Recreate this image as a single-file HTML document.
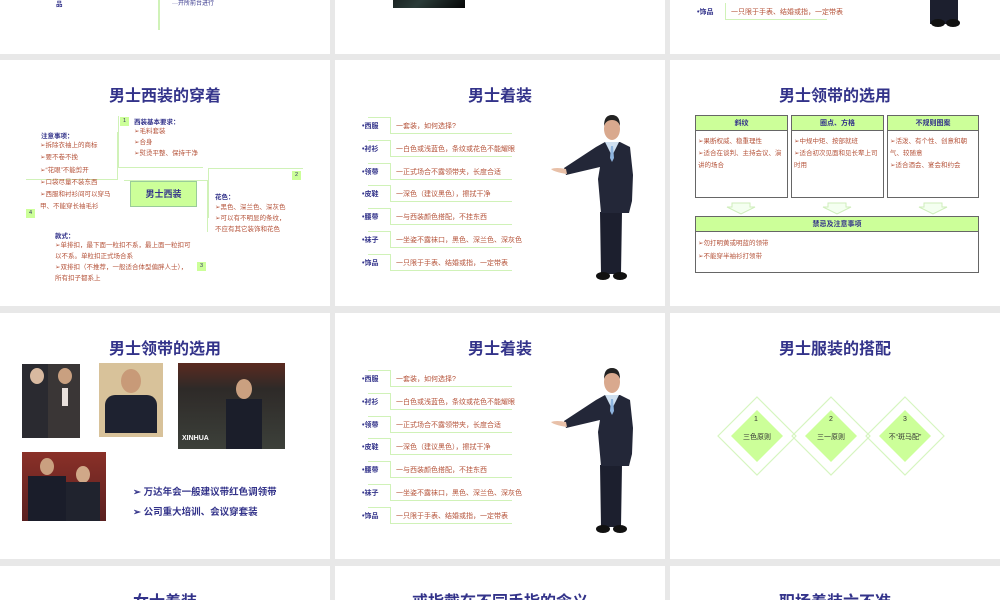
<!DOCTYPE html>
<html style="height:600px;overflow:hidden"><head><meta charset="utf-8">
<style>
*{margin:0;padding:0;box-sizing:border-box}
body{width:1000px;height:600px;background:#e8e8e8;position:relative;overflow:hidden;font-family:"Liberation Sans","Noto Sans CJK SC",sans-serif}
.s{position:absolute;width:330px;height:246px;background:#fff;overflow:hidden}
.t{position:absolute;left:0;right:0;top:22px;text-align:center;font-size:16px;font-weight:bold;color:#33338a}
.a{position:absolute}
.lb{position:absolute;font-size:7px;color:#33338a;font-weight:bold}
.rt{position:absolute;font-size:7px;color:#b5533a;white-space:nowrap}
.bt{position:absolute;font-size:6.5px;color:#b5533a;line-height:11px}
.bh{position:absolute;font-size:6.5px;color:#33338a;font-weight:bold}
.gl{position:absolute;border-color:#d0f2b8;border-style:solid;border-width:0}
.box{position:absolute;border:1px solid #666;background:#fff}
.box .h{height:15px;background:#ccff99;border-bottom:1px solid #666;text-align:center;font-size:7px;font-weight:bold;color:#33338a;line-height:15px}
.box .c{padding:5px 2px;font-size:6.5px;color:#b5533a;line-height:12px}
.num{position:absolute;width:9px;height:9px;background:#ccff99;font-size:5.5px;color:#336;text-align:center;line-height:9px}
</style></head><body>

<div class="s" style="left:0;top:-192px">
  <div class="gl" style="left:158px;top:180px;height:42px;border-left-width:2px"></div>
  <div class="rt" style="left:172px;top:190px;font-size:6px;color:#33338a">···开所前台进行</div>
  <div class="bh" style="left:56px;top:190px">品</div>
</div>
<div class="s" style="left:335px;top:-192px">
  <div class="a" style="left:58px;top:170px;width:72px;height:30px;background:linear-gradient(135deg,#101414,#2a3b38 50%,#050606)"></div>
  <div class="a" style="left:170px;top:190px;width:40px;height:2px;background:#f0d0a0"></div>
  <div class="a" style="left:255px;top:190px;width:40px;height:2px;background:#f0d0a0"></div>
</div>
<div class="s" style="left:670px;top:-192px">
  <div class="lb" style="left:27px;top:199px">•饰品</div>
  <div class="gl" style="left:55px;top:195px;width:102px;height:17px;border-left-width:1px;border-bottom-width:1px"></div>
  <div class="rt" style="left:61px;top:199px">一只限于手表、结婚或指，一定带表</div>
  <svg class="a" style="left:0;top:0" width="330" height="246"><rect x="260" y="180" width="28" height="36" fill="#1c1f2e"/><ellipse cx="268" cy="215" rx="7" ry="4" fill="#111"/><ellipse cx="283" cy="215" rx="7" ry="4" fill="#111"/></svg>
</div>

<div class="s" style="left:0;top:60px">
  <div class="t">男士西装的穿着</div>
  <div class="gl" style="left:118px;top:56px;height:52px;border-left-width:1px;border-bottom-width:1px;width:85px"></div>
  <div class="gl" style="left:208px;top:108px;height:50px;border-left-width:1px;border-top-width:1px;width:95px"></div>
  <div class="gl" style="left:26px;top:72px;height:48px;border-right-width:1px;border-bottom-width:1px;width:92px"></div>
  <div class="gl" style="left:124px;top:120px;height:52px;border-right-width:1px;border-top-width:1px;width:84px"></div>
  <div class="num" style="left:120px;top:57px">1</div>
  <div class="num" style="left:292px;top:111px">2</div>
  <div class="num" style="left:197px;top:202px">3</div>
  <div class="num" style="left:26px;top:149px">4</div>
  <div class="a" style="left:130px;top:121px;width:67px;height:26px;background:#ccff99;border:1px solid #9c9;text-align:center;line-height:24px;font-size:9px;font-weight:bold;color:#33338a">男士西装</div>
  <div class="bh" style="left:134px;top:56px">西装基本要求：</div>
  <div class="bt" style="left:134px;top:66px">➢毛料套装<br>➢合身<br>➢熨烫平整、保持干净</div>
  <div class="bh" style="left:41px;top:70px">注意事项：</div>
  <div class="bt" style="left:40px;top:80px;line-height:12.3px">➢拆除衣袖上的商标<br>➢要不卷不挽<br>➢“花眼”不能剪开<br>➢口袋尽量不装东西<br>➢西服和衬衫间可以穿马<br>甲、不能穿长袖毛衫</div>
  <div class="bh" style="left:215px;top:131px">花色：</div>
  <div class="bt" style="left:215px;top:142px">➢黑色、深兰色、深灰色<br>➢可以有不明显的条纹，<br>不应有其它装饰和花色</div>
  <div class="bh" style="left:55px;top:170px">款式：</div>
  <div class="bt" style="left:55px;top:180px">➢单排扣，最下面一粒扣不系，最上面一粒扣可<br>以不系。单粒扣正式场合系<br>➢双排扣（不推荐，一般适合体型偏胖人士），<br>所有扣子都系上</div>
</div>

<div class="s" id="m1" style="left:335px;top:60px">
  <div class="t">男士着装</div>
</div>

<div class="s" style="left:670px;top:60px">
  <div class="t">男士领带的选用</div>
  <div class="box" style="left:25px;top:55px;width:93px;height:83px"><div class="h">斜纹</div><div class="c">➢果断权威、稳重理性<br>➢适合在谈判、主持会议、演讲的场合</div></div>
  <div class="box" style="left:121px;top:55px;width:93px;height:83px"><div class="h">圈点、方格</div><div class="c">➢中规中矩、按部就班<br>➢适合初次见面和见长辈上司时用</div></div>
  <div class="box" style="left:217px;top:55px;width:92px;height:83px"><div class="h">不规则图案</div><div class="c">➢活泼、有个性、创意和朝气、较随意<br>➢适合酒会、宴会和约会</div></div>
  <svg class="a" style="left:0;top:0" width="330" height="246" fill="#f4fff0" stroke="#cfeebb" stroke-width="1"><path d="M62 143h18v4h5l-14 7-14-7h5z"/><path d="M158 143h18v4h5l-14 7-14-7h5z"/><path d="M254 143h18v4h5l-14 7-14-7h5z"/></svg>
  <div class="box" style="left:25px;top:156px;width:284px;height:57px"><div class="h">禁忌及注意事项</div><div class="c" style="line-height:13px">➢勿打明黄或明蓝的领带<br>➢不能穿半袖衫打领带</div></div>
</div>

<div class="s" style="left:0;top:313px">
  <div class="t">男士领带的选用</div>
  <div class="a" style="left:22px;top:51px;width:58px;height:74px;background:linear-gradient(90deg,#2a2a30 0 45%,#3a3636 45%);"><div style="position:absolute;left:8px;top:4px;width:14px;height:16px;border-radius:50%;background:#d8b9a0"></div><div style="position:absolute;left:36px;top:4px;width:14px;height:16px;border-radius:50%;background:#c9a080"></div><div style="position:absolute;left:40px;top:24px;width:6px;height:18px;background:#e8e0dc"></div></div>
  <div class="a" style="left:99px;top:50px;width:64px;height:74px;background:#d8c29a"><div style="position:absolute;left:22px;top:6px;width:20px;height:24px;border-radius:50%;background:#c89a78"></div><div style="position:absolute;left:6px;top:32px;width:52px;height:38px;border-radius:10px 10px 0 0;background:#1e2230"></div></div>
  <div class="a" style="left:178px;top:50px;width:107px;height:86px;background:linear-gradient(180deg,#5b2a20,#2e2a28 30%,#3c403a)"><div style="position:absolute;left:58px;top:16px;width:16px;height:20px;border-radius:50%;background:#caa080"></div><div style="position:absolute;left:48px;top:36px;width:36px;height:50px;background:#1b1e2a"></div><div style="position:absolute;left:4px;top:72px;font-size:7px;font-weight:bold;color:#fff">XINHUA</div></div>
  <div class="a" style="left:22px;top:139px;width:84px;height:69px;background:linear-gradient(180deg,#8a3028,#5a2020)"><div style="position:absolute;left:18px;top:6px;width:14px;height:17px;border-radius:50%;background:#caa080"></div><div style="position:absolute;left:54px;top:14px;width:14px;height:17px;border-radius:50%;background:#d0a888"></div><div style="position:absolute;left:6px;top:24px;width:38px;height:45px;background:#1a1d2a"></div><div style="position:absolute;left:44px;top:30px;width:34px;height:39px;background:#20232e"></div></div>
  <div class="a" style="left:133px;top:170px;font-size:9.5px;font-weight:bold;color:#33338a;line-height:20px">➢ 万达年会一般建议带红色调领带<br>➢ 公司重大培训、会议穿套装</div>
</div>

<div class="s" id="m2" style="left:335px;top:313px">
  <div class="t">男士着装</div>
</div>

<div class="s" style="left:670px;top:313px">
  <div class="t">男士服装的搭配</div>
  <svg class="a" style="left:0;top:0" width="330" height="246">
    <g fill="none" stroke="#d6f5c0" stroke-width="1.2">
      <path d="M87 84l39 39-39 39-39-39z"/><path d="M161 84l39 39-39 39-39-39z"/><path d="M235 84l39 39-39 39-39-39z"/>
    </g>
    <g fill="#ccff99"><path d="M87 97l26 26-26 26-26-26z"/><path d="M161 97l26 26-26 26-26-26z"/><path d="M235 97l26 26-26 26-26-26z"/></g>
    <g font-size="7" fill="#333" text-anchor="middle" font-family="Liberation Sans, Noto Sans CJK SC, sans-serif">
      <text x="86" y="108">1</text><text x="161" y="108">2</text><text x="235" y="108">3</text>
      <text x="87" y="126">三色原则</text><text x="161" y="126">三一原则</text><text x="235" y="126">不“斑马配”</text>
    </g>
  </svg>
</div>

<div class="s" style="left:0;top:566px;height:34px"><div class="t">女士着装</div></div>
<div class="s" style="left:335px;top:566px;height:34px"><div class="t">戒指戴在不同手指的含义</div></div>
<div class="s" style="left:670px;top:566px;height:34px"><div class="t">职场着装六不准</div></div>

<script>
var items=[["•西服","一套装，如何选择?"],["•衬衫","一白色或浅蓝色，条纹或花色不能耀眼"],["•领带","一正式场合不露领带夹，长度合适"],["•皮鞋","一深色（建议黑色），擦拭干净"],["•腰带","一与西装颜色搭配，不挂东西"],["•袜子","一坐姿不露袜口，黑色、深兰色、深灰色"],["•饰品","一只限于手表、结婚或指，一定带表"]];
var man='<svg class="a" style="left:0;top:0" width="330" height="246"><g transform="translate(-335,-60)">'+
'<path d="M600 212h11l1 62h-11z M611 212h11l-1 62h-10z" fill="#1c1f2e"/>'+
'<ellipse cx="603" cy="276" rx="7" ry="4" fill="#111"/><ellipse cx="620" cy="276" rx="7" ry="4" fill="#111"/>'+
'<path d="M605 142l-9 5-32 21 2 7 34-8-2 12 3 34h28l3-12 1-26-3-28-10-5z" fill="#232738"/>'+
'<path d="M605 142l7 14 7-14z" fill="#cfe0f0"/><path d="M611 146h2l1 12-2 4-2-4z" fill="#8eb4de"/>'+
'<ellipse cx="612" cy="129" rx="8" ry="11" fill="#d9a98e"/><path d="M604 126q0-11 8-11t8 11q-2-6-8-6t-8 6z" fill="#222"/>'+
'<path d="M566 169q-10-2-15 0 3 3 16 5z" fill="#e8c0a8"/></g></svg>';
["m1","m2"].forEach(function(id){var s=document.getElementById(id),h='';
items.forEach(function(it,i){var y=66+i*22.8;
h+='<div class="lb" style="left:27px;top:'+(y-5)+'px">'+it[0]+'</div>';
h+='<div class="gl" style="left:55px;top:'+(y-9)+'px;width:122px;height:17px;border-left-width:1px;border-bottom-width:1px"></div>';
h+='<div class="gl" style="left:33px;top:'+(y-9)+'px;width:22px;height:1px;border-top-width:1px"></div>';
h+='<div class="rt" style="left:61px;top:'+(y-5)+'px">'+it[1]+'</div>';});
s.innerHTML+=h+man;});
</script>
</body></html>
